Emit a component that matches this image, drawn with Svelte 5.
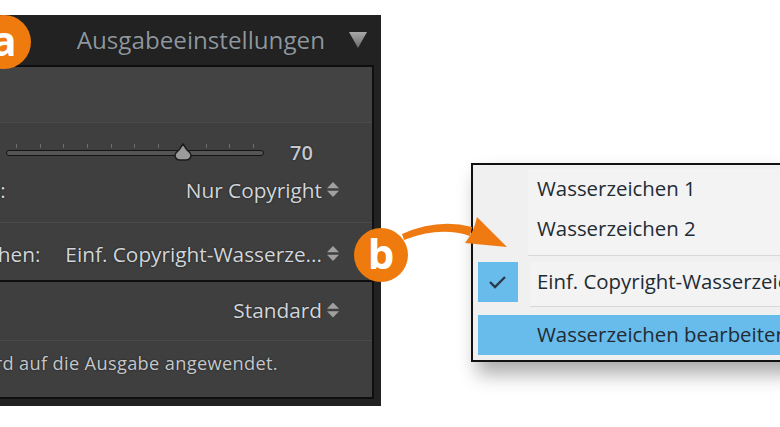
<script>
  const menuTop = ['Wasserzeichen 1', 'Wasserzeichen 2'];
</script>

<div class="page">
  <section class="panel">
    <header class="head">
      <h2>Ausgabeeinstellungen</h2>
      <svg class="tri" width="20" height="20" viewBox="0 0 20 20"><defs><linearGradient id="tg" x1="0" y1="0" x2="0" y2="1"><stop offset="0" stop-color="#a8a8a8"/><stop offset="1" stop-color="#6a6a6a"/></linearGradient></defs><path d="M1 2H19L10 18Z" fill="url(#tg)"/></svg>
    </header>
    <div class="inner">
      <div class="row r1"></div>
      <div class="row r2">
        <div class="slider">
          <div class="ticks">
            {#each Array(11) as _}<i></i>{/each}
          </div>
          <div class="track"></div>
          <svg class="thumb" width="20" height="18" viewBox="0 0 20 18"><path d="M10 1L14 7Q18 10 18 13Q17 17 13 17H7Q3 17 2 13Q2 10 6 7Z" fill="#9b9b9b" stroke="#1c1c1c" stroke-width="1.5"/></svg>
        </div>
        <span class="val">70</span>
      </div>
      <div class="row r3">
        <span class="label">Metadaten:</span><span class="sel">Nur Copyright</span><span class="step"></span>
      </div>
      <div class="row r4">
        <span class="label">Wasserzeichen:</span><span class="sel">Einf. Copyright-Wasserze...</span><span class="step"></span>
      </div>
      <div class="row r5">
        <span class="sel">Standard</span><span class="step"></span>
      </div>
      <div class="row r6">
        <span class="note">Die Einstellung wird auf die Ausgabe angewendet.</span>
      </div>
    </div>
    <span class="badge a">a</span>
  </section>

  <section class="menu">
    <ul class="group">
      {#each menuTop as m}<li>{m}</li>{/each}
    </ul>
    <div class="checked">
      <span class="check"><svg width="40" height="40" viewBox="0 0 40 40"><path d="M12 20L17 25L27 15" fill="none" stroke="#2a3a48" stroke-width="2.4"/></svg></span>
      <span class="ctext">Einf. Copyright-Wasserzeichen</span>
    </div>
    <div class="edit">Wasserzeichen bearbeiten...</div>
  </section>

  <span class="badge b">b</span>
  <svg class="arrow" width="110" height="50" viewBox="0 0 110 50">
    <path d="M2 24Q38 8 72 17L70 26Q40 16 4 30Z" fill="#ef7a12"/>
    <path d="M77 7L107 37L65 33Q74 22 77 7Z" fill="#ef7a12"/>
  </svg>
</div>

<style>
  :global(body) { margin: 0; background: #fff; }
  .page {
    position: relative;
    width: 780px;
    height: 427px;
    overflow: hidden;
    display: flex;
    align-items: flex-start;
    background: #fff;
    font-family: "Open Sans", "Liberation Sans", sans-serif;
  }
  .panel {
    position: relative;
    flex: none;
    width: 381px;
    height: 391px;
    margin-top: 15px;
    box-sizing: border-box;
    padding-right: 7px;
    background: #222;
    display: flex;
    flex-direction: column;
    overflow: hidden;
  }
  .head {
    height: 50px;
    flex: none;
    box-sizing: border-box;
    display: flex;
    align-items: center;
    justify-content: flex-end;
    padding: 0 6px 0 0;
    gap: 23px;
  }
  h2 {
    margin: 0 0 2px;
    font-size: 24.2px;
    font-weight: 400;
    color: #8e979e;
    white-space: nowrap;
    text-shadow: 0 0 1px #0008;
  }
  .inner {
    height: 334px;
    flex: none;
    box-sizing: border-box;
    background: #3f3f3f;
    border: solid #0e0e0e;
    border-width: 2px 2px 2px 0;
    display: flex;
    flex-direction: column;
  }
  .row {
    display: flex;
    align-items: center;
    justify-content: flex-end;
    padding-right: 33px;
    white-space: nowrap;
    border-bottom: 1px solid #4a4a4a;
    box-sizing: border-box;
    color: #d2d6da;
    font-size: 20.8px;
    font-weight: 500;
    text-shadow: 0 0 2px #000a;
  }
  .r1 { height: 56px; background: #434343; }
  .r2 { height: 50px; border-bottom: 0; padding: 8px 58px 0 0; gap: 26px; }
  .r3 { height: 50px; padding-bottom: 16px; }
  .r4 { height: 59px; padding-top: 4px; border-bottom: 2px solid #0e0e0e; }
  .r5 { height: 59px; padding-bottom: 2px; }
  .r6 { flex: 1; border-bottom: 0; padding: 0 94px 12px 0; }
  .slider { position: relative; width: 258px; height: 20px; flex: none; }
  .track {
    position: absolute; left: 0; right: 0; top: 8px; height: 4px;
    background: #555; border: 1px solid #141414; border-radius: 4px; box-sizing: content-box;
  }
  .ticks {
    position: absolute; left: 10px; right: 10px; top: 2px; height: 4px;
    display: flex; justify-content: space-between;
  }
  .ticks i { width: 1px; height: 4px; background: #6d6d6d; }
  .thumb { position: absolute; left: 167px; top: 1px; }
  .val { font-size: 20px; font-weight: 600; width: 24px; color: #c4c8cb; }
  .r4 .label { margin-right: 25px; }
  .r3 .label { margin-right: 180px; }
  .step {
    width: 12px; height: 15px; margin-left: 5px; flex: none;
    background: #a0a0a0;
    clip-path: polygon(50% 0, 100% 42%, 0 42%, 0 58%, 100% 58%, 50% 100%, 0 58%, 0 42%);
  }
  .note { font-size: 18.2px; letter-spacing: 0.35px; font-weight: 400; color: #c4c8cc; }
  .badge {
    position: absolute;
    display: flex; align-items: center; justify-content: center;
    width: 54px; height: 54px;
    border-radius: 50%;
    background: #ef7a0e;
    color: #fff;
    font-weight: 700;
    font-size: 42px;
    line-height: 1;
    padding-bottom: 5px;
    box-sizing: border-box;
  }
  .badge.a { left: -23px; top: 0; }
  .badge.b { left: 354px; top: 228px; }
  .menu {
    flex: none;
    box-sizing: border-box;
    width: 400px;
    height: 199px;
    margin: 163px 0 0 90px;
    padding: 4px 0 5px 5px;
    background: #f0f0f0;
    border: 2px solid #111;
    box-shadow: 6px 12px 18px #0005;
    color: #222b33;
    font-size: 20.4px;
    display: flex;
    flex-direction: column;
  }
  .group {
    list-style: none;
    margin: 0 0 0 50px;
    padding: 0 0 0 9px;
    height: 87px;
    border-bottom: 1px solid #d8d8d8;
    background: #f3f3f3;
    box-sizing: border-box;
  }
  .group li { height: 40px; box-sizing: border-box; padding-bottom: 3px; display: flex; align-items: center; }
  .checked { display: flex; align-items: center; height: 40px; margin-top: 6px; }
  .check { width: 40px; height: 40px; background: #67bcec; flex: none; }
  .ctext {
    align-self: stretch;
    flex: 1;
    margin-left: 12px;
    padding: 0 0 7px 7px;
    display: flex;
    align-items: center;
    background: #f3f3f3;
    height: 45px;
    box-sizing: border-box;
    border-bottom: 1px solid #d8d8d8;
    white-space: nowrap;
  }
  .edit {
    margin-top: 13px;
    height: 40px;
    box-sizing: border-box;
    padding: 0 0 2px 59px;
    display: flex; align-items: center;
    background: #67bcec;
    flex: none;
  }
  .arrow { position: absolute; left: 400px; top: 210px; }
</style>
